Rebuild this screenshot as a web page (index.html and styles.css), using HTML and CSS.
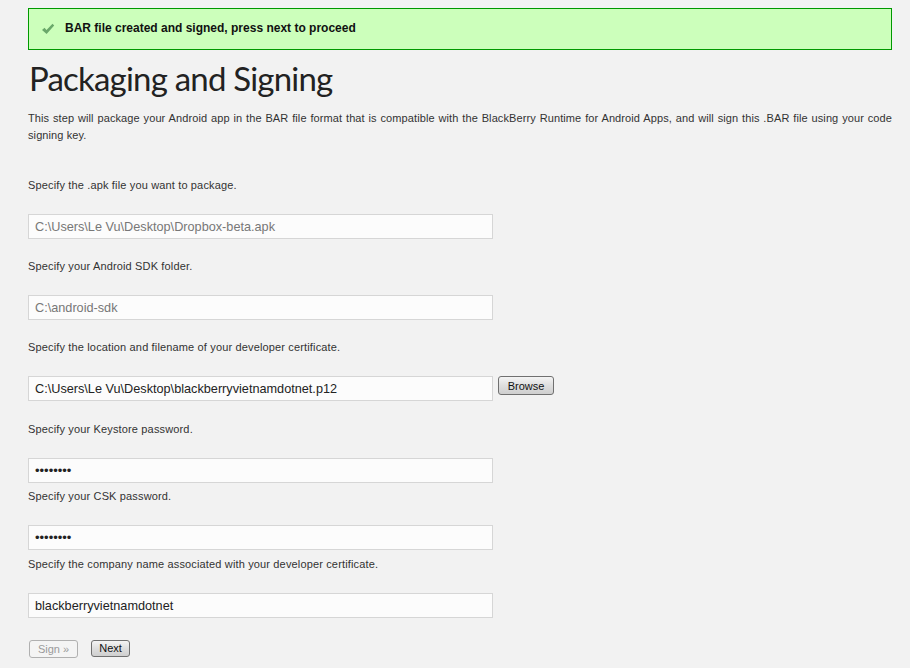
FILE: index.html
```html
<!DOCTYPE html>
<html lang="en">
<head>
    <meta charset="UTF-8">
    <title>Packaging and Signing</title>
    <link rel="stylesheet" href="styles.css">
</head>
<body>
    <div class="page">
        <div class="alert">
            <svg class="alert-icon" width="14" height="12" viewBox="0 0 14 12">
                <path d="M1 7 L3.5 4.8 L5.5 7 L11.5 0.8 L13.2 2.6 L5.6 11 Z" fill="#6aa86a"/>
            </svg>
            <span>BAR file created and signed, press next to proceed</span>
        </div>

        <h1>Packaging and Signing</h1>

        <p class="intro">This step will package your Android app in the BAR file format that is compatible with the BlackBerry Runtime for Android Apps, and will sign this .BAR file using your code signing key.</p>

        <div class="field first">
            <label>Specify the .apk file you want to package.</label>
            <input type="text" class="muted" value="C:\Users\Le Vu\Desktop\Dropbox-beta.apk">
        </div>

        <div class="field">
            <label>Specify your Android SDK folder.</label>
            <input type="text" class="muted" value="C:\android-sdk">
        </div>

        <div class="field">
            <label>Specify the location and filename of your developer certificate.</label>
            <div class="row">
                <input type="text" value="C:\Users\Le Vu\Desktop\blackberryvietnamdotnet.p12">
                <button class="btn browse">Browse</button>
            </div>
        </div>

        <div class="field">
            <label>Specify your Keystore password.</label>
            <input type="password" value="12345678">
        </div>

        <div class="field near">
            <label>Specify your CSK password.</label>
            <input type="password" value="12345678">
        </div>

        <div class="field nearer">
            <label>Specify the company name associated with your developer certificate.</label>
            <input type="text" value="blackberryvietnamdotnet">
        </div>

        <div class="actions">
            <button class="btn sign" disabled>Sign &raquo;</button>
            <button class="btn next">Next</button>
        </div>
    </div>
</body>
</html>
```

FILE: styles.css
```css
body {
    margin: 0;
    padding: 0;
    background: #f2f2f2;
    font-family: "Liberation Sans", Arial, sans-serif;
    color: #333;
}
.page {
    padding: 8px 18px 0 28px;
}
.alert {
    display: flex;
    align-items: center;
    gap: 10px;
    height: 40px;
    padding-left: 12px;
    background: #ccffbb;
    border: 1px solid #009900;
    font-size: 12px;
    font-weight: bold;
    color: #111;
}
.alert span {
    margin-top: -2px;
}
h1 {
    margin: 8px 0 0 1px;
    font-family: Lato, sans-serif;
    font-weight: 400;
    font-size: 33px;
    line-height: 40px;
    letter-spacing: -0.8px;
    color: #222;
}
.intro {
    margin: 12px 0 0;
    font-size: 11px;
    line-height: 17px;
    letter-spacing: 0.1px;
    text-align: justify;
}
.field {
    margin-top: 20px;
}
.field.first {
    margin-top: 34px;
}
.field.near {
    margin-top: 6px;
}
.field.nearer {
    margin-top: 7px;
}
.field label {
    display: block;
    font-size: 11px;
    line-height: 14px;
    letter-spacing: 0.15px;
    margin-bottom: 22px;
}
.field input {
    display: block;
    box-sizing: border-box;
    width: 465px;
    height: 25px;
    margin: 0;
    padding: 0 6px;
    border: 1px solid #d6d6d6;
    background: #fcfcfc;
    font-family: "Liberation Sans", Arial, sans-serif;
    font-size: 12.7px;
    color: #222;
}
.field input.muted {
    color: #777;
}
.field input[type=password] {
    font-size: 13px;
}
.row {
    display: flex;
    align-items: flex-start;
    gap: 5px;
    padding-bottom: 1px;
}
.btn {
    height: 18px;
    padding: 0 4px;
    border: 1px solid #707070;
    border-radius: 3px;
    background: linear-gradient(#f4f4f4, #dedede 50%, #cfcfcf);
    font-family: "Liberation Sans", Arial, sans-serif;
    font-size: 11px;
    color: #111;
    line-height: 16px;
    white-space: nowrap;
}
.browse {
    width: 56px;
    height: 19px;
}
.sign {
    width: 49px;
}
.next {
    width: 39px;
    height: 17px;
    line-height: 15px;
}
.btn:disabled {
    border-color: #b0b0b0;
    background: #f4f4f4;
    color: #9a9a9a;
}
.actions {
    display: flex;
    align-items: flex-start;
    gap: 13px;
    margin-top: 22px;
    padding-left: 1px;
}
```
